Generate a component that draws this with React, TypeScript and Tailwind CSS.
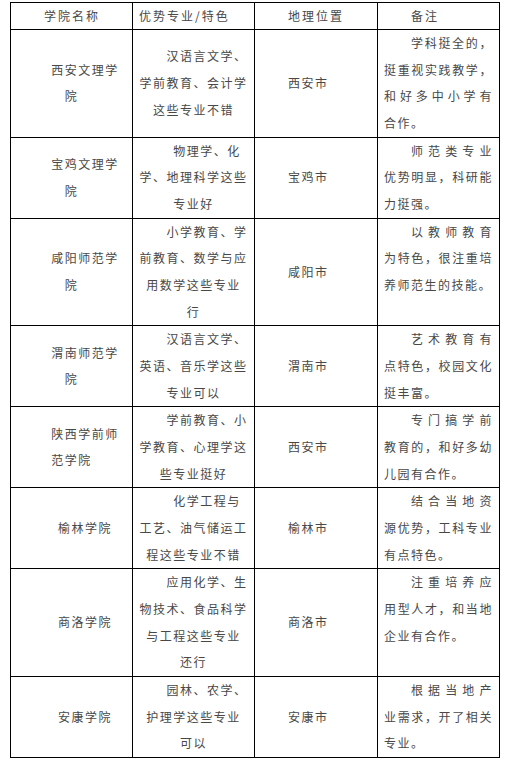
type Mode = 'center' | 'justify' | 'left'

type Row = {
  name: string[]
  major: string[]
  city: string
  note: string[]
}

const rows: Row[] = [
  {
    name: ['西安文理学', '院'],
    major: ['汉语言文学、', '学前教育、会计学', '这些专业不错'],
    city: '西安市',
    note: ['学科挺全的，', '挺重视实践教学，', '和好多中小学有', '合作。'],
  },
  {
    name: ['宝鸡文理学', '院'],
    major: ['物理学、化', '学、地理科学这些', '专业好'],
    city: '宝鸡市',
    note: ['师范类专业', '优势明显，科研能', '力挺强。'],
  },
  {
    name: ['咸阳师范学', '院'],
    major: ['小学教育、学', '前教育、数学与应', '用数学这些专业', '行'],
    city: '咸阳市',
    note: ['以教师教育', '为特色，很注重培', '养师范生的技能。'],
  },
  {
    name: ['渭南师范学', '院'],
    major: ['汉语言文学、', '英语、音乐学这些', '专业可以'],
    city: '渭南市',
    note: ['艺术教育有', '点特色，校园文化', '挺丰富。'],
  },
  {
    name: ['陕西学前师', '范学院'],
    major: ['学前教育、小', '学教育、心理学这', '些专业挺好'],
    city: '西安市',
    note: ['专门搞学前', '教育的，和好多幼', '儿园有合作。'],
  },
  {
    name: ['榆林学院'],
    major: ['化学工程与', '工艺、油气储运工', '程这些专业不错'],
    city: '榆林市',
    note: ['结合当地资', '源优势，工科专业', '有点特色。'],
  },
  {
    name: ['商洛学院'],
    major: ['应用化学、生', '物技术、食品科学', '与工程这些专业', '还行'],
    city: '商洛市',
    note: ['注重培养应', '用型人才，和当地', '企业有合作。'],
  },
  {
    name: ['安康学院'],
    major: ['园林、农学、', '护理学这些专业', '可以'],
    city: '安康市',
    note: ['根据当地产', '业需求，开了相关', '专业。'],
  },
]

function Line({ text, indent, mode }: { text: string; indent?: boolean; mode: Mode }) {
  return (
    <div
      className={[
        'leading-[26.67px] whitespace-nowrap',
        indent ? 'pl-[27px]' : '',
        mode === 'center' ? 'text-center' : '',
        mode === 'left' ? 'text-left' : '',
        mode === 'justify' ? 'text-justify [text-align-last:justify]' : '',
      ].join(' ')}
    >
      {text}
    </div>
  )
}

function Cell({ children, top }: { children: React.ReactNode; top?: boolean }) {
  return (
    <div
      className={
        'flex flex-col border-r border-b border-black px-[6px] ' +
        (top ? 'justify-start' : 'justify-center')
      }
    >
      {children}
    </div>
  )
}

function Head({ text, indent }: { text: string; indent?: boolean }) {
  return (
    <div className="flex h-[27px] flex-col justify-center border-r border-b border-black px-[6px]">
      <div className={'leading-[26px] tracking-[2px] ' + (indent ? 'pl-[27px]' : '')}>{text}</div>
    </div>
  )
}

export default function App() {
  return (
    <div className="min-h-screen bg-white pt-[2px] pl-[10px] font-['Noto_Sans_CJK_SC',sans-serif] text-[12px] tracking-[1.5px] text-[#484848]">
      <div className="grid w-[490px] grid-cols-[122px_122px_123px_122px] border-t border-l border-black">
        <Head text="学院名称" indent />
        <Head text="优势专业/特色" />
        <Head text="地理位置" indent />
        <Head text="备注" indent />

        {rows.map((r, ri) => (
          <div key={ri} className="contents">
            <Cell>
              {r.name.map((t, i) => (
                <Line key={i} text={t} indent={i === 0} mode="center" />
              ))}
            </Cell>
            <Cell>
              {r.major.map((t, i) => (
                <Line key={i} text={t} indent={i === 0} mode="center" />
              ))}
            </Cell>
            <Cell>
              <Line text={r.city} indent mode="left" />
            </Cell>
            <Cell top>
              {r.note.map((t, i) => (
                <Line
                  key={i}
                  text={t}
                  indent={i === 0}
                  mode={i === r.note.length - 1 ? 'left' : 'justify'}
                />
              ))}
            </Cell>
          </div>
        ))}
      </div>
    </div>
  )
}
